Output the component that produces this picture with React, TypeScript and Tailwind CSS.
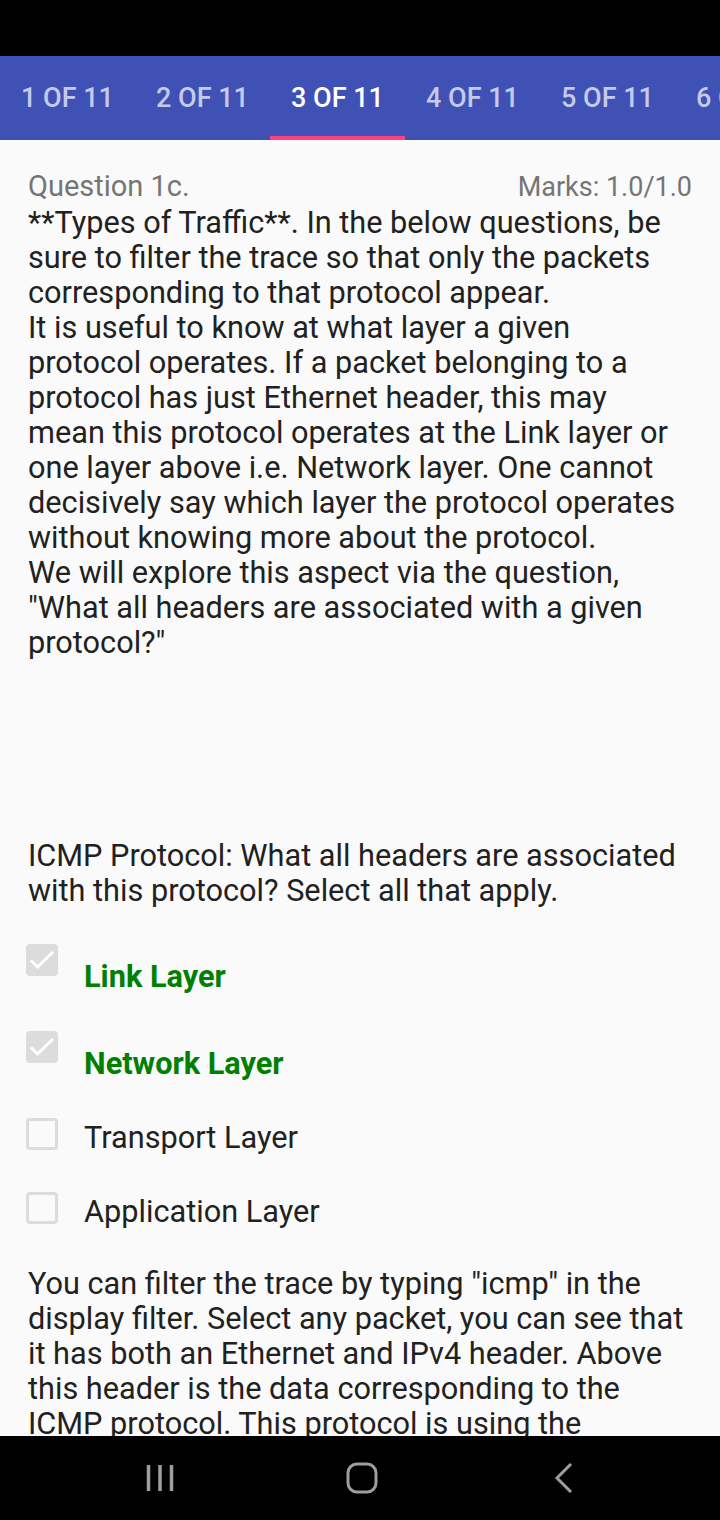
import React from 'react';

const tabs = ['1 OF 11', '2 OF 11', '3 OF 11', '4 OF 11', '5 OF 11', '6 OF 11'];

const intro = [
  '**Types of Traffic**. In the below questions, be',
  'sure to filter the trace so that only the packets',
  'corresponding to that protocol appear.',
  'It is useful to know at what layer a given',
  'protocol operates. If a packet belonging to a',
  'protocol has just Ethernet header, this may',
  'mean this protocol operates at the Link layer or',
  'one layer above i.e. Network layer. One cannot',
  'decisively say which layer the protocol operates',
  'without knowing more about the protocol.',
  'We will explore this aspect via the question,',
  '"What all headers are associated with a given',
  'protocol?"',
];

const question = ['ICMP Protocol: What all headers are associated', 'with this protocol? Select all that apply.'];

const answer = [
  'You can filter the trace by typing "icmp" in the',
  'display filter. Select any packet, you can see that',
  'it has both an Ethernet and IPv4 header. Above',
  'this header is the data corresponding to the',
  'ICMP protocol. This protocol is using the',
  'Ethernet and IPv4 headers.',
];

const options = [
  { label: 'Link Layer', checked: true },
  { label: 'Network Layer', checked: true },
  { label: 'Transport Layer', checked: false },
  { label: 'Application Layer', checked: false },
];

const Lines = ({ lines, className = '' }: { lines: string[]; className?: string }) => (
  <div className={className}>
    {lines.map((l, i) => (
      <p key={i} className="whitespace-nowrap">
        {l}
      </p>
    ))}
  </div>
);

const Check = ({ checked }: { checked: boolean }) =>
  checked ? (
    <div className="w-8 h-8 shrink-0 rounded-[4px] bg-[#dcdcdc]">
      <svg width="32" height="32" viewBox="0 0 32 32" fill="none">
        <path d="M5 16.5l6.5 6.5L27 8" stroke="#fff" strokeWidth="3" />
      </svg>
    </div>
  ) : (
    <div className="w-8 h-8 shrink-0 rounded-[4px] border-[3px] border-[#dcdcdc]" />
  );

export default function App() {
  return (
    <div className="w-[720px] h-[1520px] flex flex-col bg-[#fafafa] overflow-hidden font-['Roboto',sans-serif]">
      {/* status bar */}
      <div className="h-14 shrink-0 bg-black" />

      {/* tabs */}
      <div className="h-[84px] shrink-0 bg-[#3f51b5] flex overflow-hidden">
        {tabs.map((t, i) => (
          <div
            key={t}
            className={`w-[135px] shrink-0 flex flex-col ${i === 2 ? 'text-white' : 'text-[#c5cae9]'}`}
          >
            <div className="flex-1 flex items-center justify-center pt-1 text-[27px] font-medium whitespace-nowrap">
              {t}
            </div>
            <div className={`h-1 ${i === 2 ? 'bg-[#ff4081]' : ''}`} />
          </div>
        ))}
      </div>

      {/* content */}
      <div className="flex-1 overflow-hidden px-7 pt-[29px] text-[#212121] text-[30.7px] leading-[35px]">
        <div className="flex justify-between items-baseline">
          <span className="text-[#757575] text-[29px]">Question 1c.</span>
          <span className="text-[#757575] text-[27px]">Marks: 1.0/1.0</span>
        </div>
        <Lines lines={intro} />

        <Lines lines={question} className="mt-[178px]" />

        <div className="mt-[36px] -ml-[2px]">
          {options.map((o) =>
            o.checked ? (
              <div key={o.label} className="h-[87px] flex items-start">
                <Check checked />
                <span className="ml-[26px] mt-[15px] font-bold text-[#008000]">{o.label}</span>
              </div>
            ) : (
              <div key={o.label} className="h-[74px] flex items-start">
                <Check checked={false} />
                <span className="ml-[26px] mt-[2px]">{o.label}</span>
              </div>
            )
          )}
        </div>

        <Lines lines={answer} />
      </div>

      {/* nav bar */}
      <div className="h-[84px] shrink-0 bg-black flex items-center">
        <svg className="ml-[146px]" width="28" height="28" viewBox="0 0 28 28" fill="none" stroke="#9e9e9e" strokeWidth="3.5">
          <path d="M2.5 1v26M14 1v26M25.5 1v26" />
        </svg>
        <svg className="ml-[172px]" width="32" height="32" viewBox="0 0 32 32" fill="none" stroke="#9e9e9e" strokeWidth="3">
          <rect x="2" y="2" width="28" height="28" rx="9" />
        </svg>
        <svg className="ml-[176px]" width="20" height="30" viewBox="0 0 20 30" fill="none" stroke="#9e9e9e" strokeWidth="3">
          <path d="M17 1L3 15l14 14" />
        </svg>
      </div>
    </div>
  );
}
